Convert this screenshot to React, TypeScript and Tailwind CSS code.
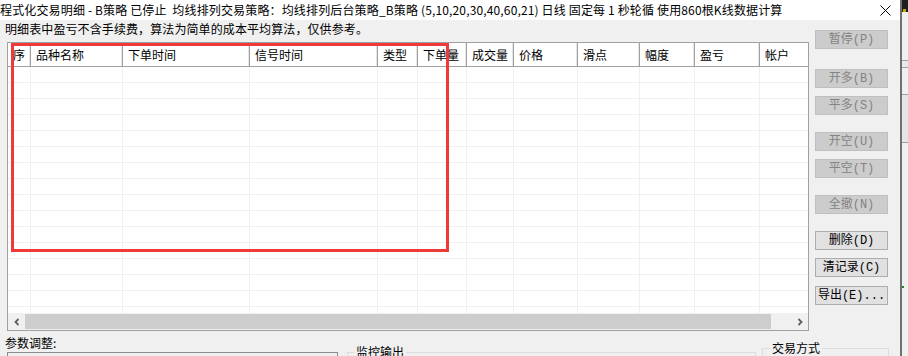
const cols = [
  { label: "序", w: "w-[23px]" },
  { label: "品种名称", w: "w-[92px]" },
  { label: "下单时间", w: "w-[127px]" },
  { label: "信号时间", w: "w-[128px]" },
  { label: "类型", w: "w-[40px]" },
  { label: "下单量", w: "w-[49px]" },
  { label: "成交量", w: "w-[47px]" },
  { label: "价格", w: "w-[64px]" },
  { label: "滑点", w: "w-[62px]" },
  { label: "幅度", w: "w-[55px]" },
  { label: "盈亏", w: "w-[65px]" },
  { label: "帐户", w: "w-[80px]" },
];

const buttons = [
  { label: "暂停(P)", on: false, mt: "mt-0" },
  { label: "开多(B)", on: false, mt: "mt-[20px]" },
  { label: "平多(S)", on: false, mt: "mt-[8px]" },
  { label: "开空(U)", on: false, mt: "mt-[17px]" },
  { label: "平空(T)", on: false, mt: "mt-[8px]" },
  { label: "全撤(N)", on: false, mt: "mt-[17px]" },
  { label: "删除(D)", on: true, mt: "mt-[17px]" },
  { label: "清记录(C)", on: true, mt: "mt-[8px]" },
  { label: "导出(E)...", on: true, mt: "mt-[9px]" },
];

function Chevron({ dir }: { dir: "left" | "right" }) {
  return (
    <svg width="8" height="8" viewBox="0 0 8 8">
      <polyline
        points={dir === "left" ? "5.5,1 2.5,4 5.5,7" : "2.5,1 5.5,4 2.5,7"}
        fill="none"
        stroke="#606060"
        strokeWidth="1.8"
      />
    </svg>
  );
}

function TradeList() {
  return (
    <div className="relative ml-[7px] h-[289px] w-[802px]">
      <div className="flex h-full w-full flex-col overflow-hidden border border-[#a0a0a0] bg-white">
        <div className="flex h-[24px] shrink-0 border-b border-[#a0a0a0]">
          {cols.map((c) => (
            <div
              key={c.label}
              className={`${c.w} flex shrink-0 items-center border-r border-[#a0a0a0] pl-[5px] shadow-[inset_-1px_0_0_#e5e5e5]`}
            >
              {c.label}
            </div>
          ))}
        </div>
        <div className="flex-1 overflow-hidden">
          {Array.from({ length: 16 }).map((_, i) => (
            <div key={i} className="flex h-[16px] border-b border-[#f0f0f0]">
              {cols.map((c) => (
                <div key={c.label} className={`${c.w} shrink-0 border-r border-[#f0f0f0]`} />
              ))}
            </div>
          ))}
        </div>
        <div className="flex h-[17px] shrink-0 bg-[#f0f0f0]">
          <div className="flex w-[17px] items-center justify-center">
            <Chevron dir="left" />
          </div>
          <div className="my-[1px] w-[746px] bg-[#cdcdcd]" />
          <div className="flex-1" />
          <div className="flex w-[17px] items-center justify-center">
            <Chevron dir="right" />
          </div>
        </div>
      </div>
      <div className="absolute left-[4px] top-[1px] h-[209px] w-[438px] border-[3px] border-[#f03a3a]" />
    </div>
  );
}

export default function App() {
  return (
    <div className="flex h-[356px] w-[908px] overflow-hidden bg-[#f0f0f0] font-['Noto_Sans_CJK_SC',sans-serif] text-[12px] text-black">
      <div className="flex w-[900px] shrink-0 flex-col">
        <div className="flex h-[20px] shrink-0 items-center bg-white">
          <div className="flex-1 overflow-hidden whitespace-pre leading-[18px] tracking-[0.15px]">
            程式化交易明细 - B策略 已停止  均线排列交易策略：均线排列后台策略_B策略 (5,10,20,30,40,60,21) 日线 固定每 1 秒轮循 使用860根K线数据计算
          </div>
          <svg width="11" height="11" viewBox="0 0 11 11" className="mr-[9px] shrink-0">
            <path d="M0.5 0.5 L10.5 10.5 M10.5 0.5 L0.5 10.5" stroke="#000" strokeWidth="1" />
          </svg>
        </div>

        <div className="flex h-[311px] shrink-0">
          <div className="flex w-[809px] shrink-0 flex-col">
            <div className="h-[22px] pl-[5px] leading-[18px] tracking-[0.1px]">
              明细表中盈亏不含手续费，算法为简单的成本平均算法，仅供参考。
            </div>
            <TradeList />
          </div>
          <div className="ml-[6px] flex flex-col pt-[10px] font-['Liberation_Mono','Noto_Sans_CJK_SC',monospace]">
            {buttons.map((b) => (
              <div
                key={b.label}
                className={`${b.mt} flex h-[19px] w-[73px] items-center justify-center border leading-none ${
                  b.on
                    ? "border-[#adadad] bg-[#e1e1e1] text-black"
                    : "border-[#bfbfbf] bg-[#cccccc] text-[#838383]"
                }`}
              >
                {b.label}
              </div>
            ))}
          </div>
        </div>

        <div className="flex flex-1 overflow-hidden">
          <div className="flex w-[338px] shrink-0 flex-col">
            <div className="h-[21px] shrink-0 pl-[5px] pt-[3px] leading-[18px]">参数调整:</div>
            <div className="ml-[7px] flex-1 border-x border-t border-[#8c8c8c]" />
          </div>
          <fieldset className="ml-[9px] mt-[14px] h-[40px] w-[409px] shrink-0 border border-[#dcdcdc]">
            <legend className="ml-[6px] px-[2px] leading-[14px]">监控输出</legend>
          </fieldset>
          <fieldset className="ml-[6px] mt-[10px] h-[40px] w-[127px] shrink-0 border border-[#dcdcdc]">
            <legend className="ml-[7px] px-[2px] leading-[14px]">交易方式</legend>
          </fieldset>
        </div>
      </div>

      <div className="w-[2px] shrink-0 bg-[#707070]" />
      <div className="flex w-[6px] shrink-0 flex-col">
        <div className="h-[12px] bg-[#1e1e1e]">
          <div className="ml-[1px] mt-[9px] h-[3px] w-[3px] bg-[#c8a800]" />
        </div>
        <div className="h-[48px] bg-[#f0f0f0]" />
        <div className="h-[8px] border-y border-[#a0a0a0] bg-[#e9e9e9]" />
        <div className="h-[27px] border-b border-[#a0a0a0] bg-[#f0f0f0]" />
        <div className="h-[48px] border-b border-[#a0a0a0] bg-[#e6e6e6]" />
        <div className="h-[145px] bg-[#f0f0f0]">
          <div className="mt-[143px] h-[2px] w-[2px] bg-[#1a8a1a]" />
        </div>
        <div className="flex-1 bg-[#f0f0f0]" />
      </div>
    </div>
  );
}
